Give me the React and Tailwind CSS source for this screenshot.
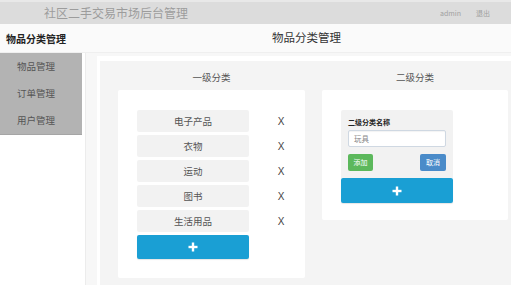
import React from "react";

const items = ["电子产品", "衣物", "运动", "图书", "生活用品"];

function Plus() {
  return (
    <svg width="10" height="10" viewBox="0 0 10 10">
      <rect x="3.8" y="0.5" width="2.4" height="9" fill="#fff" />
      <rect x="0.5" y="3.8" width="9" height="2.4" fill="#fff" />
    </svg>
  );
}

export default function App() {
  return (
    <div className="w-[511px] h-[285px] overflow-hidden bg-[#f7f7f7] flex flex-col font-['Noto_Sans_CJK_SC','Noto_Sans',sans-serif]">
      <header className="h-[24px] shrink-0 bg-[#dcdcdc] border-t-2 border-[#e8e8e8] flex items-center">
        <div className="pl-[44px] text-[12px] leading-none text-[#9c9c9c]">社区二手交易市场后台管理</div>
        <div className="ml-auto flex items-center gap-[15px] pr-[21px] text-[7px] text-[#a0a0a0]">
          <span>admin</span>
          <span>退出</span>
        </div>
      </header>
      <div className="h-[29px] shrink-0 flex items-center bg-[#fafafa] border-b border-[#efefef]">
        <div className="w-[82px] pl-[6px] text-[10px] font-bold text-[#222]">物品分类管理</div>
        <div className="flex-1 pl-[190px] text-[11.5px] text-[#333]">物品分类管理</div>
      </div>
      <div className="flex flex-1 min-h-0">
        <aside className="w-[82px] shrink-0 bg-white">
          <nav className="h-[82px] bg-[#b3b3b3] border-b border-[#a5a5a5] flex flex-col text-[9.5px] text-[#555]">
            <div className="h-[27.5px] flex items-center pl-[17px]">物品管理</div>
            <div className="h-[27.5px] flex items-center pl-[17px]">订单管理</div>
            <div className="h-[27.5px] flex items-center pl-[17px]">用户管理</div>
          </nav>
        </aside>
        <div className="flex-1 flex bg-white pl-[3px]">
          <div className="flex-1 bg-[#f7f7f7] border-l border-[#ececec] pl-[11px] pt-[3px]">
            <div className="h-full bg-white pl-[3px] pt-[5px]">
              <div className="h-full bg-[#f4f4f4] pl-[18px] flex gap-[17px]">
                <section className="w-[187px] shrink-0 flex flex-col">
                  <div className="h-[29px] flex items-center justify-center pt-[3px] text-[9.5px] text-[#555]">一级分类</div>
                  <div className="bg-white pt-[20px] pb-[19px] pl-[19px] flex flex-col gap-[3px] rounded-[2px]">
                    {items.map((t) => (
                      <div key={t} className="flex items-center">
                        <div className="w-[112px] shrink-0 h-[22px] bg-[#f2f2f2] rounded-[2px] flex items-center justify-center text-[9.5px] text-[#555]">{t}</div>
                        <div className="ml-[27px] w-[10px] text-center text-[10px] text-[#444] font-['Liberation_Sans',sans-serif]">X</div>
                      </div>
                    ))}
                    <div className="w-[112px] h-[24px] bg-[#1a9fd4] rounded-[2px] flex items-center justify-center shadow-[0_1px_1px_rgba(0,0,0,0.1)]">
                      <Plus />
                    </div>
                  </div>
                </section>
                <section className="w-[186px] shrink-0 flex flex-col">
                  <div className="h-[29px] flex items-center justify-center pt-[3px] text-[9.5px] text-[#555]">二级分类</div>
                  <div className="bg-white pt-[20px] pb-[17px] pl-[19px] rounded-[2px]">
                    <div className="w-[112px] bg-[#f2f2f2] rounded-t-[2px] px-[7px] pt-[9px] pb-[7px]">
                      <div className="text-[7px] font-bold text-[#222] leading-none">二级分类名称</div>
                      <div className="mt-[4px] h-[17px] bg-white border border-[#cfd8e2] rounded-[2px] flex items-center pl-[5px] text-[7.5px] text-[#888] shadow-[inset_0_1px_1px_rgba(0,0,0,0.05)]">玩具</div>
                      <div className="mt-[7px] flex justify-between">
                        <div className="w-[25px] h-[17px] bg-[#5cb85c] rounded-[2px] flex items-center justify-center text-[7px] text-white">添加</div>
                        <div className="w-[26px] h-[17px] bg-[#4a8bc9] rounded-[2px] flex items-center justify-center text-[7px] text-white">取消</div>
                      </div>
                    </div>
                    <div className="w-[112px] h-[25px] bg-[#1a9fd4] rounded-[2px] flex items-center justify-center shadow-[0_1px_1px_rgba(0,0,0,0.1)]">
                      <Plus />
                    </div>
                  </div>
                </section>
              </div>
            </div>
          </div>
        </div>
      </div>
    </div>
  );
}
